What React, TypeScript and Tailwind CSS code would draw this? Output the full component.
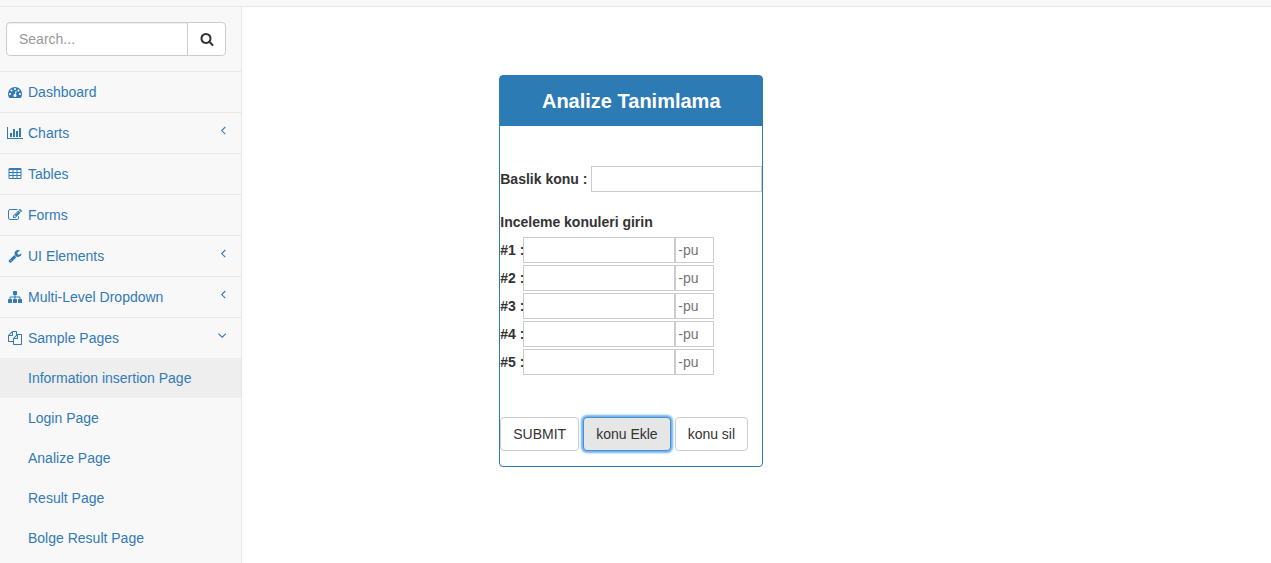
import React from "react";

const icons = {
  search:
    "M1216 832q0-185-131.5-316.5t-316.5-131.5-316.5 131.5-131.5 316.5 131.5 316.5 316.5 131.5 316.5-131.5 131.5-316.5zm512 832q0 52-38 90t-90 38q-54 0-90-38l-343-342q-179 124-399 124-143 0-273.5-55.5t-225-150-150-225-55.5-273.5 55.5-273.5 150-225 225-150 273.5-55.5 273.5 55.5 225 150 150 225 55.5 273.5q0 220-124 399l343 343q37 37 37 90z",
  dashboard:
    "M384 1152q0-53-37.5-90.5t-90.5-37.5-90.5 37.5-37.5 90.5 37.5 90.5 90.5 37.5 90.5-37.5 37.5-90.5zm192-448q0-53-37.5-90.5t-90.5-37.5-90.5 37.5-37.5 90.5 37.5 90.5 90.5 37.5 90.5-37.5 37.5-90.5zm428 481l101-382q6-26-7.5-48.5t-38.5-29.5-48 6.5-30 39.5l-101 382q-60 5-107 43.5t-63 98.5q-20 77 20 146t117 89 146-20 89-117q16-60-6-117t-72-91zm660-33q0-53-37.5-90.5t-90.5-37.5-90.5 37.5-37.5 90.5 37.5 90.5 90.5 37.5 90.5-37.5 37.5-90.5zm-640-640q0-53-37.5-90.5t-90.5-37.5-90.5 37.5-37.5 90.5 37.5 90.5 90.5 37.5 90.5-37.5 37.5-90.5zm448 192q0-53-37.5-90.5t-90.5-37.5-90.5 37.5-37.5 90.5 37.5 90.5 90.5 37.5 90.5-37.5 37.5-90.5zm320 448q0 261-141 483-19 29-54 29h-1402q-35 0-54-29-141-221-141-483 0-182 71-348t191-286 286-191 348-71 348 71 286 191 191 286 71 348z",
  chart:
    "M640 896v512H384V896h256zm384-512v1024H768V384h256zm1024 1152v128H0V128h128v1408h1920zm-640-896v768h-256V640h256zm384-384v1152h-256V256h256z",
  table:
    "M224 128h1344q66 0 113 47t47 113v1088q0 66-47 113t-113 47H224q-66 0-113-47t-47-113V288q0-66 47-113t113-47zM192 384v256h384V384zM704 384v256h384V384zM1216 384v256h384V384zM192 768v256h384V768zM704 768v256h384V768zM1216 768v256h384V768zM192 1152v256h384v-256zM704 1152v256h384v-256zM1216 1152v256h384v-256z",
  edit:
    "M888 1184l116-116-152-152-116 116v56h96v96h56zm440-720q-16-16-33 1l-350 350q-17 17-1 33t33-1l350-350q17-17 1-33zm80 594v190q0 119-84.5 203.5t-203.5 84.5h-832q-119 0-203.5-84.5t-84.5-203.5v-832q0-119 84.5-203.5t203.5-84.5h832q63 0 117 25 15 7 18 23 3 17-9 29l-49 49q-14 14-32 8-23-6-45-6h-832q-66 0-113 47t-47 113v832q0 66 47 113t113 47h832q66 0 113-47t47-113v-126q0-13 9-22l64-64q15-15 35-7t20 29zm-96-738l288 288-672 672h-288v-288zm444 132l-92 92-288-288 92-92q28-28 68-28t68 28l152 152q28 28 28 68t-28 68z",
  wrench:
    "M448 1472q0-26-19-45t-45-19-45 19-19 45 19 45 45 19 45-19 19-45zm644-420l-682 682q-37 37-90 37-52 0-91-37l-106-108q-38-36-38-90 0-53 38-91l681-681q39 98 114.5 173.5t173.5 114.5zm634-435q0 39-23 106-47 134-164.5 217.5t-258.5 83.5q-185 0-316.5-131.5t-131.5-316.5 131.5-316.5 316.5-131.5q58 0 121.5 16.5t107.5 46.5q16 11 16 28t-16 28l-293 169v224l193 107q5-3 79-48.5t135.5-81 70.5-35.5q15 0 23.5 10t8.5 25z",
  sitemap:
    "M1792 1248v320q0 40-28 68t-68 28h-320q-40 0-68-28t-28-68v-320q0-40 28-68t68-28h96v-192h-512v192h96q40 0 68 28t28 68v320q0 40-28 68t-68 28h-320q-40 0-68-28t-28-68v-320q0-40 28-68t68-28h96v-192h-512v192h96q40 0 68 28t28 68v320q0 40-28 68t-68 28h-320q-40 0-68-28t-28-68v-320q0-40 28-68t68-28h96v-192q0-52 38-90t90-38h512v-192h-96q-40 0-68-28t-28-68v-320q0-40 28-68t68-28h320q40 0 68 28t28 68v320q0 40-28 68t-68 28h-96v192h512q52 0 90 38t38 90v192h96q40 0 68 28t28 68z",
  files:
    "M1696 384q40 0 68 28t28 68v1216q0 40-28 68t-68 28h-960q-40 0-68-28t-28-68v-288h-544q-40 0-68-28t-28-68v-672q0-40 20-88t48-76l408-408q28-28 76-48t88-20h416q40 0 68 28t28 68v328q68-40 128-40h416zm-544 213l-299 299h299v-299zm-640-384l-299 299h299v-299zm196 647l316-316v-416h-384v416q0 40-28 68t-68 28h-416v640h512v-256q0-40 20-88t48-76zm956 804v-1152h-384v416q0 40-28 68t-68 28h-416v640h896z",
};

type IconName = keyof typeof icons;

function Icon({ name }: { name: IconName }) {
  const wide = name === "chart";
  return (
    <svg
      aria-hidden="true"
      viewBox={wide ? "0 0 2048 1792" : "0 0 1792 1792"}
      className={wide ? "h-3.5 w-4" : "size-3.5"}
      fill="currentColor"
      fillRule={name === "table" ? "evenodd" : "nonzero"}
    >
      <path d={icons[name]} />
    </svg>
  );
}

function Angle({ open }: { open: boolean }) {
  return (
    <svg
      aria-hidden="true"
      viewBox="0 0 10 10"
      className="mb-1 size-2.5"
      fill="none"
      stroke="currentColor"
      strokeWidth="1.1"
    >
      <path d={open ? "M0.4 2.6L4.2 6.2L8 2.6" : "M7.3 1L3.7 4.6L7.3 8.2"} />
    </svg>
  );
}

const menu: { label: string; icon: IconName; arrow?: "closed" | "open" }[] = [
  { label: "Dashboard", icon: "dashboard" },
  { label: "Charts", icon: "chart", arrow: "closed" },
  { label: "Tables", icon: "table" },
  { label: "Forms", icon: "edit" },
  { label: "UI Elements", icon: "wrench", arrow: "closed" },
  { label: "Multi-Level Dropdown", icon: "sitemap", arrow: "closed" },
  { label: "Sample Pages", icon: "files", arrow: "open" },
];

const pages = [
  "Information insertion Page",
  "Login Page",
  "Analize Page",
  "Result Page",
  "Bolge Result Page",
];

function Sidebar() {
  return (
    <aside className="w-[242px] shrink-0 border-r border-[#e7e7e7] bg-[#f8f8f8]">
      <form
        className="flex border-b border-[#e7e7e7] py-[15px] pr-[15px] pl-1.5"
        onSubmit={(e) => e.preventDefault()}
      >
        <input
          type="text"
          aria-label="Search"
          placeholder="Search..."
          className="h-[34px] min-w-0 flex-1 rounded-l border border-[#ccc] bg-white px-3 shadow-[inset_0_1px_1px_rgba(0,0,0,0.075)] placeholder:text-[#999]"
        />
        <button
          type="submit"
          aria-label="Submit search"
          className="-ml-px flex h-[34px] w-[39px] items-center justify-center rounded-r border border-[#ccc] bg-white text-[#333]"
        >
          <Icon name="search" />
        </button>
      </form>
      <nav className="text-[#337ab7]">
        <ul>
          {menu.map((item) => (
            <li key={item.label} className="border-b border-[#e7e7e7] last:border-b-0">
              <a href="#" className="flex items-center gap-1 py-2.5 pr-[13px] pl-1.5">
                <span className="flex w-[18px] justify-center">
                  <Icon name={item.icon} />
                </span>
                <span className="flex-1">{item.label}</span>
                {item.arrow && <Angle open={item.arrow === "open"} />}
              </a>
              {item.arrow === "open" && (
                <ul>
                  {pages.map((page, i) => (
                    <li key={page}>
                      <a
                        href="#"
                        className={i === 0 ? "block bg-[#eee] py-2.5 pl-7" : "block py-2.5 pl-7"}
                      >
                        {page}
                      </a>
                    </li>
                  ))}
                </ul>
              )}
            </li>
          ))}
        </ul>
      </nav>
    </aside>
  );
}

const button = "h-[34px] rounded border px-3";

function Panel() {
  return (
    <section className="ml-[25%] w-[264px] rounded border border-[#2c7bb4] bg-white">
      <h1 className="bg-[#2c7bb4] py-[13px] text-center text-[20px] leading-6 font-bold text-white">
        Analize Tanimlama
      </h1>
      <form className="pt-10 pb-[15px]" onSubmit={(e) => e.preventDefault()}>
        <div className="flex items-center gap-1">
          <label htmlFor="title" className="shrink-0 font-bold">
            Baslik konu :
          </label>
          <input id="title" type="text" className="h-[26px] min-w-0 flex-1 border border-[#ccc] px-0.5" />
        </div>
        <fieldset className="mt-5">
          <legend className="mb-[5px] font-bold">Inceleme konuleri girin</legend>
          <div className="flex flex-col gap-0.5">
            {[1, 2, 3, 4, 5].map((n) => (
              <div key={n} className="flex items-center">
                <label htmlFor={`topic-${n}`} className="w-[23px] whitespace-nowrap font-bold">
                  #{n} :
                </label>
                <input
                  id={`topic-${n}`}
                  type="text"
                  className="h-[26px] w-[152px] border border-[#ccc] px-0.5"
                />
                <input
                  type="text"
                  inputMode="numeric"
                  aria-label={`Puan ${n}`}
                  placeholder="-puan"
                  className="h-[26px] w-[39px] border border-[#ccc] pr-[15px] pl-0.5 placeholder:text-[#757575]"
                />
              </div>
            ))}
          </div>
        </fieldset>
        <div className="mt-[42px] flex gap-1">
          <button type="submit" className={`${button} border-[#ccc] bg-white`}>
            SUBMIT
          </button>
          <button
            type="button"
            className={`${button} border-[#4a90d0] bg-[#e6e6e6] shadow-[0_0_2px_2px_#6db3f2]`}
          >
            konu Ekle
          </button>
          <button type="button" className={`${button} border-[#ccc] bg-white`}>
            konu sil
          </button>
        </div>
      </form>
    </section>
  );
}

export default function App() {
  return (
    <div className="flex h-screen flex-col overflow-hidden bg-white font-['Liberation_Sans',Arial,sans-serif] text-[14px] leading-5 text-[#333]">
      <header className="h-[7px] shrink-0 border-b border-[#e7e7e7] bg-[#f8f8f8]" />
      <div className="flex min-h-0 flex-1">
        <Sidebar />
        <main className="min-w-0 flex-1 pt-[68px]">
          <Panel />
        </main>
      </div>
    </div>
  );
}
